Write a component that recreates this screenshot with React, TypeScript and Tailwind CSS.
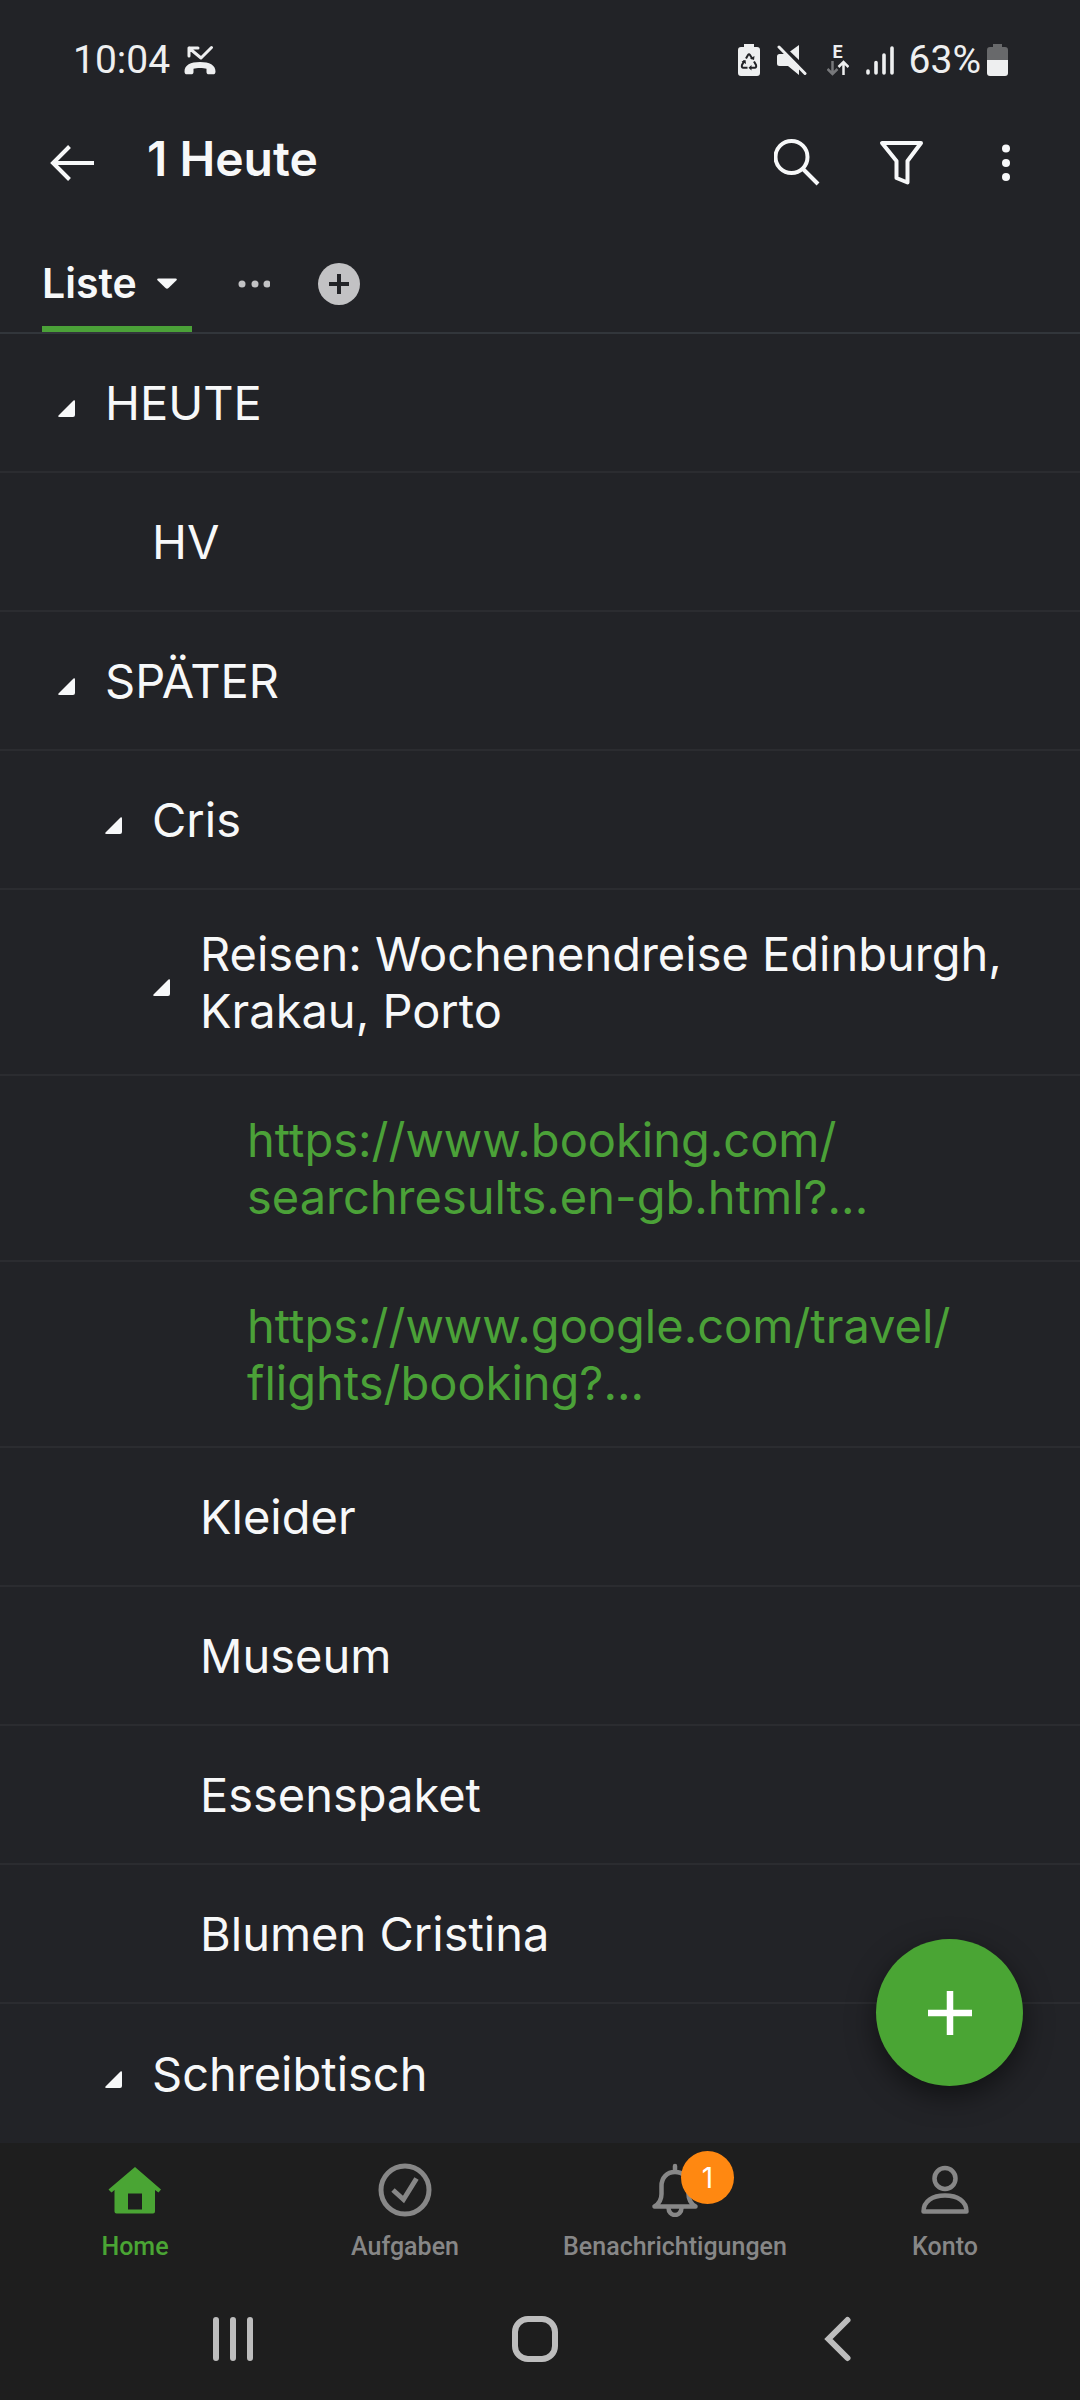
import { useState } from 'react'
import clsx from 'clsx'

type Item = {
  id: string
  level: number
  text: string
  href?: string
  group?: boolean
}

const items: Item[] = [
  { id: 'heute', level: 0, text: 'HEUTE', group: true },
  { id: 'hv', level: 1, text: 'HV' },
  { id: 'spaeter', level: 0, text: 'SPÄTER', group: true },
  { id: 'cris', level: 1, text: 'Cris', group: true },
  { id: 'reisen', level: 2, text: 'Reisen: Wochenendreise Edinburgh, Krakau, Porto', group: true },
  {
    id: 'booking',
    level: 3,
    text: 'https://www.booking.com/\nsearchresults.en-gb.html?...',
    href: 'https://www.booking.com/searchresults.en-gb.html',
  },
  {
    id: 'flights',
    level: 3,
    text: 'https://www.google.com/travel/\nflights/booking?...',
    href: 'https://www.google.com/travel/flights/booking',
  },
  { id: 'kleider', level: 2, text: 'Kleider' },
  { id: 'museum', level: 2, text: 'Museum' },
  { id: 'essen', level: 2, text: 'Essenspaket' },
  { id: 'blumen', level: 2, text: 'Blumen Cristina' },
  { id: 'schreibtisch', level: 1, text: 'Schreibtisch', group: true },
]

const indent = ['pl-[58px]', 'pl-[105px]', 'pl-[153px]', 'pl-[200px]']

function visibleItems(collapsed: string[]) {
  const result: Item[] = []
  let hiddenBelow: number | null = null
  for (const item of items) {
    if (hiddenBelow !== null && item.level > hiddenBelow) continue
    hiddenBelow = collapsed.includes(item.id) ? item.level : null
    result.push(item)
  }
  return result
}

function StatusBar() {
  return (
    <div className="flex h-[118px] shrink-0 items-center pl-[73px] pr-[72px] pt-0.5 font-['Roboto',sans-serif] text-[39px] leading-none text-[#eeeff0]">
      <span>10:04</span>
      <svg className="ml-[14px] h-8 w-8" viewBox="0 0 32 32" fill="none" aria-label="Verpasster Anruf">
        <path d="M5 12V4h9M5 4l12 10L27.500 3.500" stroke="currentColor" strokeWidth="3" strokeLinejoin="round" strokeLinecap="round" />
        <path
          d="M0.500 27.500c0-6.500 6-9.500 15.500-9.500s15.500 3 15.500 9.500c0 2-1 2.800-2.500 2.800h-4c-1.700 0-2.500-.8-2.500-2.300v-3.200c-3-1.200-10-1.200-13 0V28c0 1.500-.8 2.300-2.500 2.300h-4c-1.500 0-2.500-.8-2.500-2.800z"
          fill="currentColor"
        />
      </svg>
      <div className="ml-auto flex items-center">
        <svg className="h-8 w-[22px]" viewBox="0 0 22 32" aria-label="Akkuschutz">
          <path d="M6 0h10v3h3a3 3 0 0 1 3 3v23a3 3 0 0 1-3 3H3a3 3 0 0 1-3-3V6a3 3 0 0 1 3-3h3z" fill="currentColor" />
          <g fill="none" stroke="#222327" strokeWidth="2">
            <path d="M8 14.500l2-3.500q1-1.500 2 0l2.500 4" />
            <path d="M16 17.500l2 3.500q.8 2.500-1.500 2.800H12.500" />
            <path d="M6.500 16.500L4 21q-.8 2.500 1.500 2.800H9.500" />
          </g>
          <path d="M12 14.500l4 1.500.5-4zM13.500 21v5.500l-3-2.700zM3.500 17.500l4-1.500.5 4z" fill="#222327" />
        </svg>
        <svg className="ml-[17px] h-8 w-[30px]" viewBox="0 0 30 32" aria-label="Stumm">
          <path d="M22 1v26L11 19V9z" fill="currentColor" />
          <path d="M0 12.500Q0 10 2.500 10H9l13 13v8L11 22H2.500Q0 22 0 19.500z" fill="currentColor" />
          <path d="M3.500 1L31 27.500" stroke="#222327" strokeWidth="4" />
          <path d="M2 3L28 29.500" stroke="currentColor" strokeWidth="3" strokeLinecap="round" />
        </svg>
        <div className="ml-5 flex w-[22px] flex-col items-center">
          <span className="text-[18px] font-bold leading-[16px]">E</span>
          <svg className="h-4 w-[22px]" viewBox="0 0 22 16" fill="none" strokeWidth="2.500">
            <path d="M5.500 1v13M0.500 9l5 5 5-5" stroke="#77787b" />
            <path d="M16.500 15V2M11.500 7l5-5 5 5" stroke="currentColor" />
          </svg>
        </div>
        <svg className="ml-[17px] h-8 w-7" viewBox="0 0 28 32" stroke="currentColor" strokeWidth="3.600" strokeLinecap="round" aria-label="Signal">
          <path d="M2 27v2M10 18.500V29M18 11v18M26 4v25" />
        </svg>
        <span className="ml-[15px]">63%</span>
        <svg className="ml-1.5 h-8 w-[21px]" viewBox="0 0 21 32" aria-label="Akku">
          <path d="M6 0h9v3h3a3 3 0 0 1 3 3v10H0V6a3 3 0 0 1 3-3h3z" fill="#68696b" />
          <path d="M0 16h21v13a3 3 0 0 1-3 3H3a3 3 0 0 1-3-3z" fill="currentColor" />
        </svg>
      </div>
    </div>
  )
}

function Header() {
  return (
    <header className="flex h-[90px] shrink-0 items-center pl-12 pr-[50px]">
      <button type="button" aria-label="Zurück">
        <svg className="h-12 w-12" viewBox="0 0 48 48" fill="none" stroke="currentColor" strokeWidth="4">
          <path d="M46 24H5M21.500 7.500L5 24l16.500 16.500" />
        </svg>
      </button>
      <h1 className="ml-[51px] pb-2 text-[48px] font-semibold leading-14">1 Heute</h1>
      <div className="ml-auto flex items-center gap-14">
        <button type="button" aria-label="Suchen">
          <svg className="h-12 w-12" viewBox="0 0 48 48" fill="none" stroke="currentColor" strokeWidth="4">
            <circle cx="17.500" cy="18" r="16" />
            <path d="M28.500 29.500L44 45" />
          </svg>
        </button>
        <button type="button" aria-label="Filtern">
          <svg className="h-12 w-12" viewBox="0 0 48 48" fill="none" stroke="currentColor" strokeWidth="4" strokeLinejoin="round">
            <path d="M4 4h39L29.500 22v21.500l-11-4.500V22z" />
          </svg>
        </button>
        <button type="button" aria-label="Mehr">
          <svg className="h-12 w-12" viewBox="0 0 48 48" fill="currentColor">
            <circle cx="24" cy="9.500" r="4" />
            <circle cx="24" cy="24" r="4" />
            <circle cx="24" cy="38" r="4" />
          </svg>
        </button>
      </div>
    </header>
  )
}

function ViewTabs() {
  return (
    <div className="mt-7 flex h-[98px] shrink-0 items-stretch border-b-2 border-[#32363b] pl-[42px]">
      <button type="button" className="flex w-[150px] items-center gap-5 border-b-[6px] border-[#4ba138] pt-1.5 text-[41px] font-semibold text-[#f7f8f9]">
        Liste
        <svg className="h-3 w-5" viewBox="0 0 20 12" fill="currentColor">
          <path d="M1.500 0.500h17q2 .3 1 1.800L11.500 10q-1.500 1.300-3 0L.500 2.300Q-.5.800 1.500.500z" />
        </svg>
      </button>
      <button type="button" aria-label="Ansichtsoptionen" className="ml-[46px]">
        <svg className="h-8 w-8" viewBox="0 0 32 32" fill="#c2c2c4">
          <circle cx="4" cy="16" r="3.500" />
          <circle cx="17" cy="16" r="3.500" />
          <circle cx="29" cy="16" r="3.500" />
        </svg>
      </button>
      <button type="button" aria-label="Ansicht hinzufügen" className="ml-12">
        <svg className="h-[42px] w-[42px]" viewBox="0 0 42 42">
          <circle cx="21" cy="21" r="21" fill="#c2c2c4" />
          <path d="M21 11v20M11 21h20" stroke="#222327" strokeWidth="4" />
        </svg>
      </button>
    </div>
  )
}

function Row({ item, open, onToggle }: { item: Item; open: boolean; onToggle: () => void }) {
  return (
    <li
      className={clsx(
        'flex min-h-[139px] items-center border-b-2 border-[#2b2c30] py-[35px] pr-14 text-[47px] leading-[57px] last:border-b-0',
        indent[item.level],
      )}
    >
      {item.group ? (
        <button type="button" aria-label={item.text} aria-expanded={open} onClick={onToggle} className="mr-[30px] shrink-0">
          <svg className="h-7 w-[17px]" viewBox="0 0 17 28" fill="currentColor">
            {open ? (
              <path d="M17 12.500V26q0 2-2 2H1.500q-2 0-1-1.500L15.500 11.500q1.500-1 1.500 1z" />
            ) : (
              <path d="M2 8l12 10L2 28z" />
            )}
          </svg>
        </button>
      ) : (
        <span className="w-[47px] shrink-0" />
      )}
      {item.href ? (
        <a href={item.href} className="whitespace-pre-line text-[#4ba138]">
          {item.text}
        </a>
      ) : (
        <span>{item.text}</span>
      )}
    </li>
  )
}

function BottomNav() {
  return (
    <nav className="grid shrink-0 grid-cols-4 pb-[15px] pt-5 font-['Roboto',sans-serif] text-[25px] font-medium leading-8 text-[#878787]">
      <a href="#home" className="flex flex-col items-center gap-3.5 text-[#4aa534]">
        <svg className="h-[54px] w-[54px]" viewBox="0 0 54 54" fill="currentColor">
          <path d="M27 4L53 26.500l-2.500 3-3.500-2.500V48.500q0 2-2 2H8.500q-2 0-2-2V27L3.500 29.500l-3-3zM20 30.500v16h14v-16z" fillRule="evenodd" />
        </svg>
        Home
      </a>
      <a href="#aufgaben" className="flex flex-col items-center gap-3.5">
        <svg className="h-[54px] w-[54px]" viewBox="0 0 54 54" fill="none" stroke="currentColor" strokeWidth="5">
          <circle cx="27" cy="27" r="24" />
          <path d="M15 27l10.500 9.500L38.500 15.500" />
        </svg>
        Aufgaben
      </a>
      <a href="#benachrichtigungen" className="flex flex-col items-center gap-3.5">
        <span className="relative">
          <svg className="h-[54px] w-[54px]" viewBox="0 0 54 54" fill="none" stroke="currentColor" strokeWidth="4.500" strokeLinejoin="round" strokeLinecap="round">
            <path d="M27 3v6M27 9c-8 0-13.500 5.500-13.500 14v8c0 6-2 9.500-7 12.500h41c-5-3-7-6.500-7-12.500v-8c0-8.500-5.500-14-13.500-14z" />
            <path d="M20.500 45a6.500 7 0 0 0 13 0" />
          </svg>
          <span className="absolute -top-3 left-[33px] flex h-[53px] w-[53px] items-center justify-center rounded-full bg-[#ff8811] font-['Inter',sans-serif] text-[28px] font-normal text-white">
            1
          </span>
        </span>
        Benachrichtigungen
      </a>
      <a href="#konto" className="flex flex-col items-center gap-3.5">
        <svg className="h-[54px] w-[54px]" viewBox="0 0 54 54" fill="none" stroke="currentColor" strokeWidth="4.500" strokeLinejoin="round">
          <circle cx="27" cy="15.500" r="10.500" />
          <path d="M5.500 48.500c0-10.500 9-16 21.500-16s21.500 5.500 21.500 16z" />
        </svg>
        Konto
      </a>
    </nav>
  )
}

function SystemNav() {
  return (
    <div className="grid h-[122px] shrink-0 grid-cols-3 items-center pl-[82px] pr-[92px] text-[#bdbdbd]">
      <button type="button" aria-label="Letzte Apps" className="flex justify-center">
        <svg className="h-12 w-12" viewBox="0 0 48 48" stroke="currentColor" strokeWidth="6">
          <path d="M7 5v38M24 5v38M41 5v38" strokeLinecap="round" />
        </svg>
      </button>
      <button type="button" aria-label="Startbildschirm" className="flex justify-center">
        <svg className="h-12 w-12" viewBox="0 0 48 48" fill="none" stroke="currentColor" strokeWidth="6">
          <rect x="4" y="4" width="40" height="40" rx="13" />
        </svg>
      </button>
      <button type="button" aria-label="Zurück" className="flex justify-center">
        <svg className="h-12 w-12" viewBox="0 0 48 48" fill="none" stroke="currentColor" strokeWidth="6" strokeLinecap="round">
          <path d="M34.500 5L15.500 24l19 19" />
        </svg>
      </button>
    </div>
  )
}

export default function App() {
  const [collapsed, setCollapsed] = useState<string[]>([])

  const toggle = (id: string) => {
    setCollapsed((ids) => (ids.includes(id) ? ids.filter((x) => x !== id) : [...ids, id]))
  }

  return (
    <div className="flex h-screen flex-col bg-[#222327] font-['Inter',sans-serif] text-[#f7f8f9]">
      <StatusBar />
      <Header />
      <ViewTabs />
      <main className="relative min-h-0 flex-1">
        <ul className="h-full overflow-y-auto [scrollbar-width:none]">
          {visibleItems(collapsed).map((item) => (
            <Row key={item.id} item={item} open={!collapsed.includes(item.id)} onToggle={() => toggle(item.id)} />
          ))}
        </ul>
        <button
          type="button"
          aria-label="Neuer Eintrag"
          className="absolute bottom-[57px] right-[57px] flex h-[147px] w-[147px] items-center justify-center rounded-full bg-[#4aa534] text-white shadow-[0_10px_28px_rgba(0,0,0,0.5)]"
        >
          <svg className="h-11 w-11" viewBox="0 0 44 44" stroke="currentColor" strokeWidth="6.500">
            <path d="M22 0v44M0 22h44" />
          </svg>
        </button>
      </main>
      <div className="shrink-0 bg-[#1e1e1e]">
        <BottomNav />
        <SystemNav />
      </div>
    </div>
  )
}
